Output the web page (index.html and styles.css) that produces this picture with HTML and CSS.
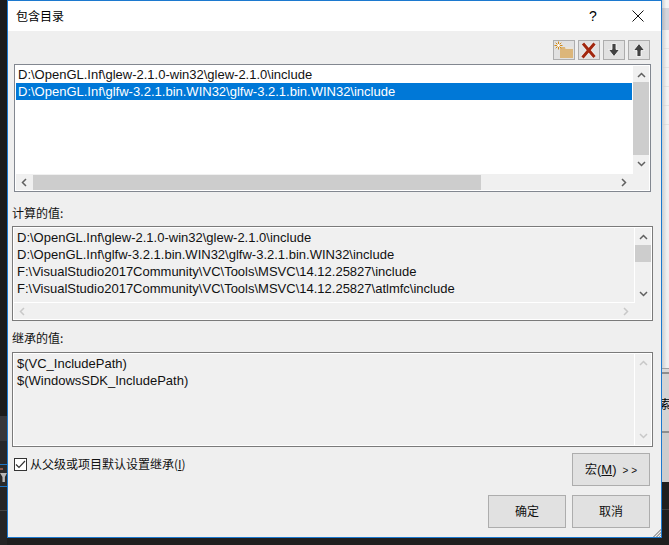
FILE: index.html
```html
<!DOCTYPE html>
<html lang="zh-CN">
<head>
<meta charset="utf-8">
<title>包含目录</title>
<link rel="stylesheet" href="styles.css">
</head>
<body>
<div class="backdrop-right">
  <div class="bd-top"></div>
  <div class="bd-head"></div>
  <div class="bd-lines"></div>
  <div class="bd-light"></div>
  <div class="bd-rule thin"></div>
  <div class="bd-gap"></div>
  <div class="bd-rule"></div>
  <div class="bd-band"><span class="bd-text">索</span></div>
  <div class="bd-rule"></div>
  <div class="bd-band2"></div>
  <div class="bd-dark"></div>
  <div class="bd-line"></div>
  <div class="bd-dark2"></div>
</div>
<div class="backdrop-left">
  <div class="bl-top"></div>
  <div class="bl-band"></div>
  <div class="bl-mid"></div>
  <div class="bl-sel"><span class="bl-dot"></span><span class="bl-icon"></span></div>
  <div class="bl-low"></div>
  <div class="bl-line"></div>
  <div class="bl-end"></div>
</div>
<div class="dialog">
  <header class="titlebar">
    <span class="title">包含目录</span>
    <span class="help">?</span>
    <svg class="close" width="12" height="12" viewBox="0 0 12 12"><path d="M.5.5l11 11M11.5.5l-11 11" stroke="#111" fill="none"/></svg>
  </header>
  <div class="body">
    <div class="toolbar">
      <button class="tool">
        <svg width="20" height="18" viewBox="0 0 20 18"><path d="M6 6h5l1 2h7v9H6z" fill="#dcb67a"/><path d="M11 7h8" fill="none" stroke="#f2e6cf"/><path d="M4.500 .5v8M.5 4.500h8M1.700 1.700l5.600 5.600M7.300 1.700l-5.600 5.600" stroke="#d08a18"/><circle cx="4.500" cy="4.500" r="1.400" fill="#fff"/></svg>
      </button>
      <button class="tool">
        <svg width="18" height="17" viewBox="0 0 18 17"><path d="M3 1.500l11.500 13.500M14.500 1.500L2.500 15.500" stroke="#fff" stroke-width="4.500" fill="none" opacity=".5"/><path d="M3 1.500l11.500 13.500M14.500 1.500L2.500 15.500" stroke="#a1260d" stroke-width="3" fill="none"/></svg>
      </button>
      <button class="tool">
        <svg width="14" height="16" viewBox="0 0 14 16"><path d="M5 1.500h4v6h3.500L7 14.500 1.500 7.500H5z" fill="#424242" stroke="#fff" stroke-width=".8"/></svg>
      </button>
      <button class="tool">
        <svg width="14" height="16" viewBox="0 0 14 16"><path d="M5 14.500h4v-6h3.500L7 1.500 1.500 8.500H5z" fill="#424242" stroke="#fff" stroke-width=".8"/></svg>
      </button>
    </div>

    <div class="listbox editable">
      <div class="lb-main">
        <div class="lb-content white">
          <div class="row">D:\OpenGL.Inf\glew-2.1.0-win32\glew-2.1.0\include</div>
          <div class="row selected">D:\OpenGL.Inf\glfw-3.2.1.bin.WIN32\glfw-3.2.1.bin.WIN32\include</div>
        </div>
        <div class="vbar v1">
          <svg class="chev" width="9" height="6" viewBox="0 0 9 6"><path d="M1 5l3.500-3.500L8 5" fill="none" stroke="#606060" stroke-width="1.500"/></svg>
          <div class="thumb t1"></div>
          <svg class="chev" width="9" height="6" viewBox="0 0 9 6"><path d="M1 1l3.500 3.500L8 1" fill="none" stroke="#606060" stroke-width="1.500"/></svg>
        </div>
      </div>
      <div class="hbar">
        <svg class="hchev" width="6" height="9" viewBox="0 0 6 9"><path d="M5 1L1.500 4.500 5 8" fill="none" stroke="#606060" stroke-width="1.500"/></svg>
        <div class="hthumb"></div>
        <svg class="hchev right" width="6" height="9" viewBox="0 0 6 9"><path d="M1 1l3.500 3.500L1 8" fill="none" stroke="#606060" stroke-width="1.500"/></svg>
      </div>
    </div>

    <div class="label l-calc">计算的值:</div>
    <div class="listbox readonly">
      <div class="lb-main">
        <div class="lb-content">
          <div class="row">D:\OpenGL.Inf\glew-2.1.0-win32\glew-2.1.0\include</div>
          <div class="row">D:\OpenGL.Inf\glfw-3.2.1.bin.WIN32\glfw-3.2.1.bin.WIN32\include</div>
          <div class="row">F:\VisualStudio2017Community\VC\Tools\MSVC\14.12.25827\include</div>
          <div class="row">F:\VisualStudio2017Community\VC\Tools\MSVC\14.12.25827\atlmfc\include</div>
        </div>
        <div class="vbar">
          <svg class="chev" width="9" height="6" viewBox="0 0 9 6"><path d="M1 5l3.500-3.500L8 5" fill="none" stroke="#606060" stroke-width="1.500"/></svg>
          <div class="thumb t2"></div>
          <svg class="chev" width="9" height="6" viewBox="0 0 9 6"><path d="M1 1l3.500 3.500L8 1" fill="none" stroke="#606060" stroke-width="1.500"/></svg>
        </div>
      </div>
      <div class="hbar">
        <svg class="hchev" width="6" height="9" viewBox="0 0 6 9"><path d="M5 1L1.500 4.500 5 8" fill="none" stroke="#c8c8c8" stroke-width="1.500"/></svg>
        <div class="hspace"></div>
        <svg class="hchev right" width="6" height="9" viewBox="0 0 6 9"><path d="M1 1l3.500 3.500L1 8" fill="none" stroke="#c8c8c8" stroke-width="1.500"/></svg>
      </div>
    </div>

    <div class="label l-inh">继承的值:</div>
    <div class="listbox readonly tall">
      <div class="lb-main">
        <div class="lb-content">
          <div class="row">$(VC_IncludePath)</div>
          <div class="row">$(WindowsSDK_IncludePath)</div>
        </div>
        <div class="vbar">
          <svg class="chev" width="9" height="6" viewBox="0 0 9 6"><path d="M1 5l3.500-3.500L8 5" fill="none" stroke="#c8c8c8" stroke-width="1.500"/></svg>
          <div class="vspace"></div>
          <svg class="chev" width="9" height="6" viewBox="0 0 9 6"><path d="M1 1l3.500 3.500L8 1" fill="none" stroke="#c8c8c8" stroke-width="1.500"/></svg>
        </div>
      </div>
    </div>

    <div class="footer-row">
      <label class="check">
        <span class="box"><svg width="11" height="9" viewBox="0 0 11 9"><path d="M1 4.500l3 3L10 1" fill="none" stroke="#333" stroke-width="1.200"/></svg></span>
        <span class="check-text">从父级或项目默认设置继承(<u>I</u>)</span>
      </label>
      <button class="btn">宏<span class="latin">(<u>M</u>)</span><span class="arrows">&gt; &gt;</span></button>
    </div>
    <div class="actions">
      <button class="btn">确定</button>
      <button class="btn">取消</button>
    </div>
    <div class="grip"></div>
  </div>
</div>
</body>
</html>
```

FILE: styles.css
```css
* { box-sizing: border-box; }
html, body { margin: 0; padding: 0; }
body {
  width: 669px;
  height: 545px;
  position: relative;
  overflow: hidden;
  background: #1f1f1f;
  font-family: "Noto Sans CJK SC", "Liberation Sans", sans-serif;
  font-size: 12px;
  color: #000;
}

/* Other windows showing behind the dialog */
.backdrop-right {
  position: absolute;
  left: 662px;
  top: 0;
  width: 7px;
  height: 545px;
  display: flex;
  flex-direction: column;
}
.bd-top { height: 8px; background: linear-gradient(90deg, #cfcfcf, #f4f4f4 60%); }
.bd-head { height: 22px; background: linear-gradient(90deg, #b8b8bc, #d4d5dc 60%); }
.bd-lines {
  height: 100px;
  background:
    linear-gradient(90deg, #cfcfcf, rgba(240, 240, 240, 0) 70%),
    repeating-linear-gradient(180deg, #f3f3f3 0 18px, #e4e4e4 18px 19px);
}
.bd-light { height: 238px; background: linear-gradient(90deg, #cfcfcf, #f0f0f0 70%); }
.bd-rule { height: 2px; background: #8e8e8e; flex: none; }
.bd-rule.thin { height: 1px; background: #a0a0a0; }
.bd-gap { height: 3px; background: #d8d8d8; }
.bd-band { height: 57px; background: #d4d4d4; overflow: hidden; font-size: 12px; line-height: 60px; }
.bd-text { margin-left: -3px; }
.bd-band2 { height: 49px; background: #cdcdcd; }
.bd-dark { height: 27px; background: #1f1f1f; }
.bd-line { height: 1px; background: #3c3c3c; }
.bd-dark2 { flex: 1; background: #1f1f1f; }

.backdrop-left {
  position: absolute;
  left: 0;
  top: 0;
  width: 7px;
  height: 545px;
  display: flex;
  flex-direction: column;
}
.bl-top { height: 416px; background: #1c1c1c; }
.bl-band { height: 25px; background: #37373b; }
.bl-mid { height: 23px; background: #27272a; }
.bl-sel {
  height: 23px;
  border-top: 1px solid #1c74c4;
  border-bottom: 1px solid #1c74c4;
  background: #2a2a2a;
  overflow: hidden;
}
.bl-dot {
  display: block;
  width: 3px;
  height: 2px;
  margin-top: 3px;
  background: #8a5a50;
}
.bl-icon {
  display: block;
  width: 7px;
  height: 9px;
  margin-top: 3px;
  background: #b8b8b8;
  clip-path: polygon(0 0, 100% 0, 70% 45%, 70% 100%, 35% 100%, 35% 45%);
}
.bl-low { height: 23px; background: #252526; }
.bl-line { height: 1px; background: #444; }
.bl-end { flex: 1; background: #252526; }

/* Dialog */
.dialog {
  position: absolute;
  left: 7px;
  top: 0;
  width: 655px;
  height: 538px;
  border: 1px solid #1c79cf;
  background: #f0f0f0;
  display: flex;
  flex-direction: column;
}
.titlebar {
  height: 30px;
  flex: none;
  background: #fff;
  display: flex;
  align-items: center;
  padding: 0 17px 0 8px;
}
.title { font-size: 12px; flex: 1; line-height: 30px; }
.help { font-family: "Liberation Sans", sans-serif; font-size: 14px; margin-right: 35px; width: 8px; }
.close { display: block; }
.body {
  flex: 1;
  position: relative;
  padding: 9px 8px 0 4px;
  background: #efefef;
  display: flex;
  flex-direction: column;
}
.toolbar {
  display: flex;
  justify-content: flex-end;
  gap: 3px;
  height: 20px;
  padding-right: 3px;
}
.tool {
  width: 22px;
  height: 20px;
  padding: 0;
  border: 1px solid #adadad;
  background: #e1e1e1;
  display: flex;
  align-items: center;
  justify-content: center;
}

/* List boxes */
.listbox {
  border: 1px solid #828790;
  padding: 1px;
  background: #fff;
  font-family: "Liberation Sans", "Noto Sans CJK SC", sans-serif;
  display: flex;
  flex-direction: column;
}
.editable {
  margin: 4px 2px 0 2px;
  height: 128px;
}
.readonly {
  height: 95px;
  border-color: #7a7a7a;
}
.lb-main { flex: 1; display: flex; min-height: 0; }
.lb-content {
  flex: 1;
  padding: 2px 0 0 3px;
  background: #f0f0f0;
  border-right: 1px solid #fff;
  border-bottom: 1px solid #fff;
  overflow: hidden;
}
.tall .lb-content { border-bottom: 0; }
.lb-content.white {
  background: #fff;
  padding: 0 1px 0 0;
  border: 0;
}
.row {
  height: 17px;
  line-height: 15px;
  font-size: 13px;
  white-space: nowrap;
  color: #111;
}
.white .row { padding-left: 2px; line-height: 17px; padding-top: 0; }
.selected { background: #0078d7; color: #fff; }
.vbar {
  width: 16px;
  flex: none;
  display: flex;
  flex-direction: column;
  align-items: center;
  padding: 6px 0;
  background: #f0f0f0;
}
.v1 { padding-bottom: 7px; }
.chev { flex: none; display: block; }
.thumb { width: 16px; background: #cdcdcd; flex: none; }
.t1 { height: 73px; margin-top: 4px; }
.t2 { height: 17px; margin-top: 5px; }
.vspace { flex: 1; }
.vbar .chev:last-child { margin-top: auto; }
.hbar {
  height: 16px;
  flex: none;
  display: flex;
  align-items: center;
  padding: 0 22px 0 5px;
  background: #f0f0f0;
}
.hchev { flex: none; display: block; }
.hchev.right { margin-left: auto; }
.hthumb { width: 448px; height: 15px; background: #cdcdcd; margin-left: 6px; }
.hspace { flex: 1; }
.label {
  height: 16px;
  line-height: 16px;
  font-size: 12px;
  color: #111;
}
.l-calc { margin-top: 13px; margin-bottom: 5px; }
.l-inh { margin-top: 9px; margin-bottom: 6px; }

/* Footer */
.footer-row {
  display: flex;
  justify-content: space-between;
  align-items: flex-start;
  margin-top: 6px;
  height: 33px;
  padding-right: 3px;
}
.check {
  display: flex;
  align-items: center;
  gap: 3px;
  margin: 5px 0 0 2px;
  height: 13px;
  font-size: 12px;
  color: #111;
}
.check-text { margin-bottom: 3px; }
.box {
  width: 13px;
  height: 13px;
  border: 1px solid #333;
  background: #fff;
  display: flex;
  align-items: center;
  justify-content: center;
}
.btn {
  width: 78px;
  height: 33px;
  padding: 0 0 2px;
  border: 1px solid #adadad;
  background: #e1e1e1;
  font: inherit;
  font-size: 12px;
  color: #111;
}
.latin { font-family: "Liberation Sans", sans-serif; font-size: 13px; }
.arrows { font-family: "Liberation Sans", sans-serif; font-size: 10px; margin-left: 6px; }
.actions {
  display: flex;
  justify-content: flex-end;
  gap: 6px;
  margin-top: 9px;
  padding-right: 3px;
}
.grip {
  position: absolute;
  right: 0;
  bottom: 0;
  width: 9px;
  height: 9px;
  background: repeating-linear-gradient(135deg, #f0f0f0 0 1px, #a8a8a8 1px 2px);
  clip-path: polygon(100% 0, 100% 100%, 0 100%);
}
```
